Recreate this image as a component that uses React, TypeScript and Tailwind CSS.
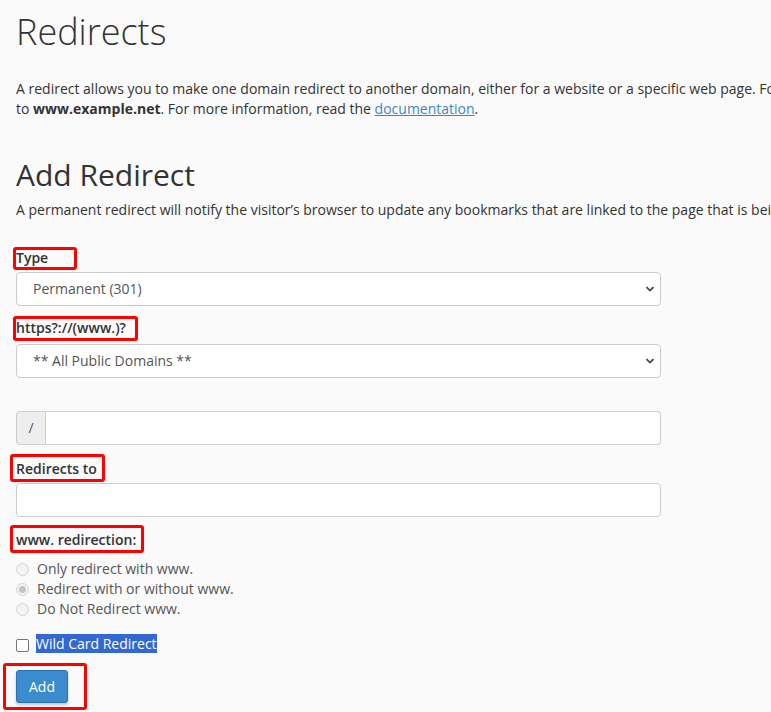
import { useState } from 'react'

const RedBox = ({ className }: { className: string }) => (
  <span className={`pointer-events-none absolute border-[3px] border-[#ff0000] rounded-[3px] ${className}`} />
)

const Chevron = () => (
  <svg className="absolute right-[5px] top-1/2 -translate-y-1/2" width="12" height="12" viewBox="0 0 12 12">
    <path d="M2.5 4.2 L6 7.6 L9.5 4.2" fill="none" stroke="#444" strokeWidth="1.8" />
  </svg>
)

function App() {
  const [mode, setMode] = useState('both')
  const [wild, setWild] = useState(false)

  return (
    <div className="w-full h-[712px] overflow-hidden bg-[#fafafa] text-[#333] text-[14px] leading-[20px] font-['Open_Sans',sans-serif]">
      <div className="w-[1200px] pl-[16px]">
        <h1 className="text-[36px] leading-[40px] font-light pt-[12px]">Redirects</h1>

        <p className="mt-[27px] whitespace-nowrap">
          A redirect allows you to make one domain redirect to another domain, either for a website or a specific web page. For example, create a redirect so that www.example.com automatically redirects users
          <br />
          to <b>www.example.net</b>. For more information, read the{' '}
          <a href="#" className="text-[#3a87c8] underline">documentation</a>.
        </p>

        <h2 className="text-[30px] leading-[33px] mt-[39px]">Add Redirect</h2>
        <p className="mt-[9px] whitespace-nowrap">
          A permanent redirect will notify the visitor’s browser to update any bookmarks that are linked to the page that is being redirected. A temporary redirect will not update the visitor’s bookmarks.
        </p>

        <form className="w-[645px] mt-[28px]" onSubmit={(e) => e.preventDefault()}>
          <label className="relative block font-semibold">
            Type
            <RedBox className="-left-[3px] -top-[1px] w-[64px] h-[23px]" />
          </label>
          <div className="relative mt-[4px]">
            <select className="appearance-none w-full h-[34px] bg-white border border-[#ccc] rounded-[4px] pl-[16px] text-[#555] outline-none">
              <option>Permanent (301)</option>
              <option>Temporary (302)</option>
            </select>
            <Chevron />
          </div>

          <label className="relative block font-semibold mt-[12px]">
            https?://(www.)?
            <RedBox className="-left-[3px] -top-[2px] w-[125px] h-[25px]" />
          </label>
          <div className="relative mt-[6px]">
            <select className="appearance-none w-full h-[34px] bg-white border border-[#ccc] rounded-[4px] pl-[16px] text-[#555] outline-none">
              <option>** All Public Domains **</option>
            </select>
            <Chevron />
          </div>

          <div className="flex mt-[33px] h-[34px]">
            <span className="w-[30px] flex items-center justify-center bg-[#eee] border border-[#ccc] rounded-l-[4px] text-[#555]">/</span>
            <input className="flex-1 bg-white border border-l-0 border-[#ccc] rounded-r-[4px] outline-none" />
          </div>

          <label className="relative block font-semibold mt-[14px]">
            Redirects to
            <RedBox className="-left-[6px] -top-[5px] w-[95px] h-[28px]" />
          </label>
          <input className="block w-full h-[34px] mt-[4px] bg-white border border-[#ccc] rounded-[4px] outline-none" />

          <label className="relative block font-semibold mt-[13px]">
            www. redirection:
            <RedBox className="-left-[6px] -top-[5px] w-[134px] h-[28px]" />
          </label>
          <div className="mt-[9px] flex flex-col">
            {[
              ['www', 'Only redirect with www.'],
              ['both', 'Redirect with or without www.'],
              ['none', 'Do Not Redirect www.'],
            ].map(([value, text]) => (
              <label key={value} className="flex items-center h-[20px] text-[#555]">
                <span
                  onClick={() => setMode(value)}
                  className="w-[13px] h-[13px] rounded-full border border-[#d3d3d3] bg-[#f3f3f3] flex items-center justify-center mr-[8px]"
                >
                  {mode === value && <span className="w-[7px] h-[7px] rounded-full bg-[#c4c4c4]" />}
                </span>
                {text}
              </label>
            ))}
          </div>

          <label className="flex items-center mt-[14px] h-[20px]">
            <span
              onClick={() => setWild(!wild)}
              className="w-[13px] h-[13px] rounded-[2px] border border-[#767676] bg-white mr-[7px] mt-[5px]"
            />
            <span className="bg-[#3367d1] text-white leading-[19px]">Wild Card Redirect</span>
          </label>

          <div className="relative inline-block mt-[17px]">
            <button className="w-[52px] h-[33px] bg-[#3b8bcf] border border-[#2d72b0] rounded-[3px] text-white shadow-[0_2px_3px_rgba(0,0,0,0.2)]">
              Add
            </button>
            <RedBox className="-left-[13px] -top-[7px] w-[84px] h-[47px]" />
          </div>
        </form>
      </div>
    </div>
  )
}

export default App
